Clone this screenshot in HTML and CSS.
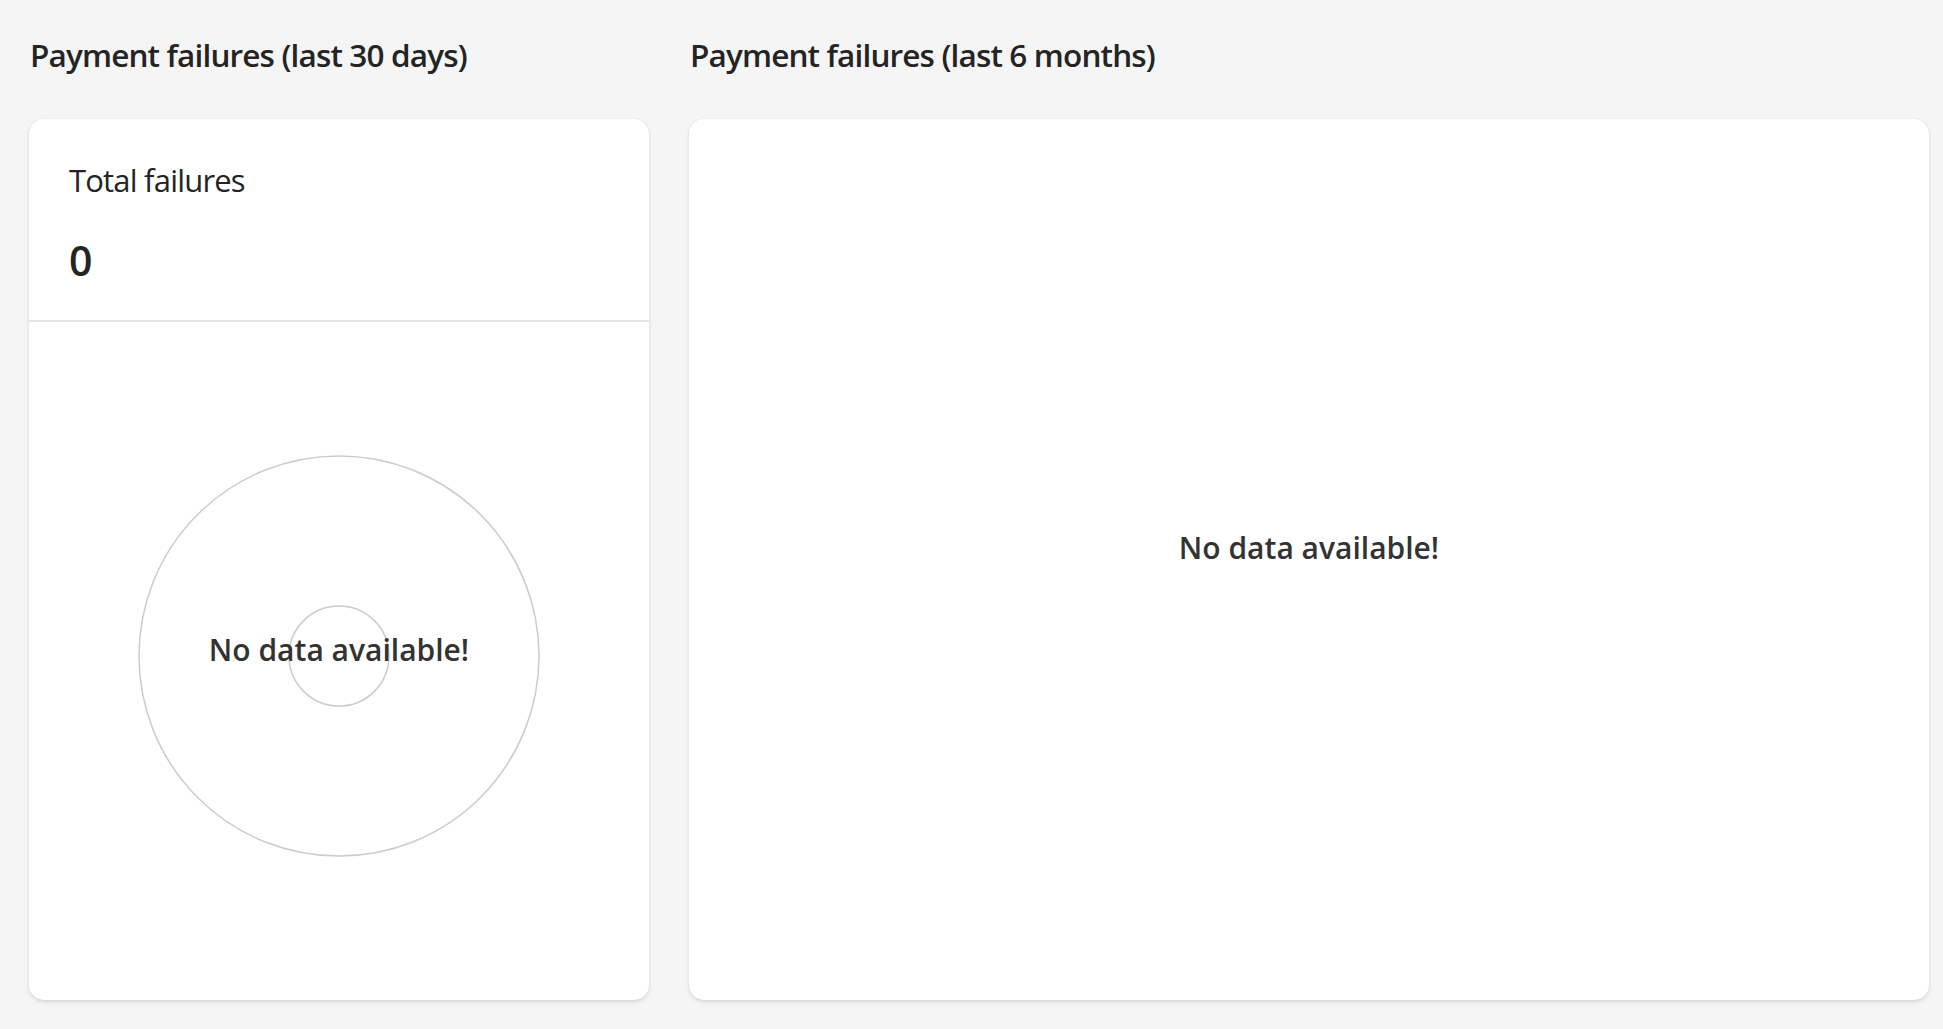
FILE: index.html
```html
<!DOCTYPE html>
<html lang="en">
<head>
<meta charset="utf-8">
<title>Payment failures</title>
<link rel="stylesheet" href="styles.css">
</head>
<body>
<main class="dashboard">
  <section class="panel">
    <h2 class="panel-title">Payment failures (last 30 days)</h2>
    <div class="card card-left">
      <div class="kpi">
        <div class="kpi-label">Total failures</div>
        <div class="kpi-value">0</div>
      </div>
      <div class="chart-area">
        <svg class="donut" width="620" height="678" viewBox="0 0 620 678">
          <circle cx="310" cy="334" r="200" fill="none" stroke="#cccccc" stroke-width="1.5"/>
          <circle cx="310" cy="334" r="50" fill="none" stroke="#cccccc" stroke-width="1.5"/>
          <text class="no-data-svg" x="310" y="339" text-anchor="middle">No data available!</text>
        </svg>
      </div>
    </div>
  </section>
  <section class="panel">
    <h2 class="panel-title">Payment failures (last 6 months)</h2>
    <div class="card card-right">
      <div class="no-data">No data available!</div>
    </div>
  </section>
</main>
</body>
</html>
```

FILE: styles.css
```css
* { box-sizing: border-box; }
html, body {
  margin: 0;
  padding: 0;
  background: #f5f5f5;
}
body {
  font-family: "Open Sans", "Noto Sans", sans-serif;
  color: #242424;
}
.dashboard {
  height: 1029px;
  padding: 34px 14px 29px 29px;
  display: grid;
  grid-template-columns: 620px 1240px;
  column-gap: 40px;
}
.panel {
  display: flex;
  flex-direction: column;
  min-height: 0;
}
.panel-title {
  margin: 0 0 43px 1px;
  font-size: 31.5px;
  line-height: 42px;
  font-weight: 600;
  letter-spacing: -0.85px;
  color: #242424;
}
.card {
  flex: 1;
  background: #ffffff;
  border-radius: 15px;
  box-shadow: 0 2px 4px rgba(0, 0, 0, 0.12), 0 0 2px rgba(0, 0, 0, 0.06);
  display: flex;
  flex-direction: column;
  overflow: hidden;
}
.kpi {
  padding: 41px 40px 35px 40px;
  border-bottom: 2px solid #e4e4e4;
}
.kpi-label {
  font-size: 31px;
  line-height: 40px;
  font-weight: 400;
  letter-spacing: -0.8px;
}
.kpi-value {
  margin-top: 35px;
  font-size: 41px;
  line-height: 50px;
  font-weight: 600;
}
.chart-area {
  flex: 1;
  display: flex;
  justify-content: center;
  align-items: flex-start;
}
.donut { display: block; }
.no-data-svg {
  font-family: "Open Sans", "Noto Sans", sans-serif;
  font-size: 30px;
  font-weight: 600;
  fill: #333333;
}
.card-right {
  align-items: center;
  justify-content: center;
  padding-bottom: 24px;
}
.no-data {
  font-size: 30px;
  font-weight: 600;
  color: #333333;
}
```
